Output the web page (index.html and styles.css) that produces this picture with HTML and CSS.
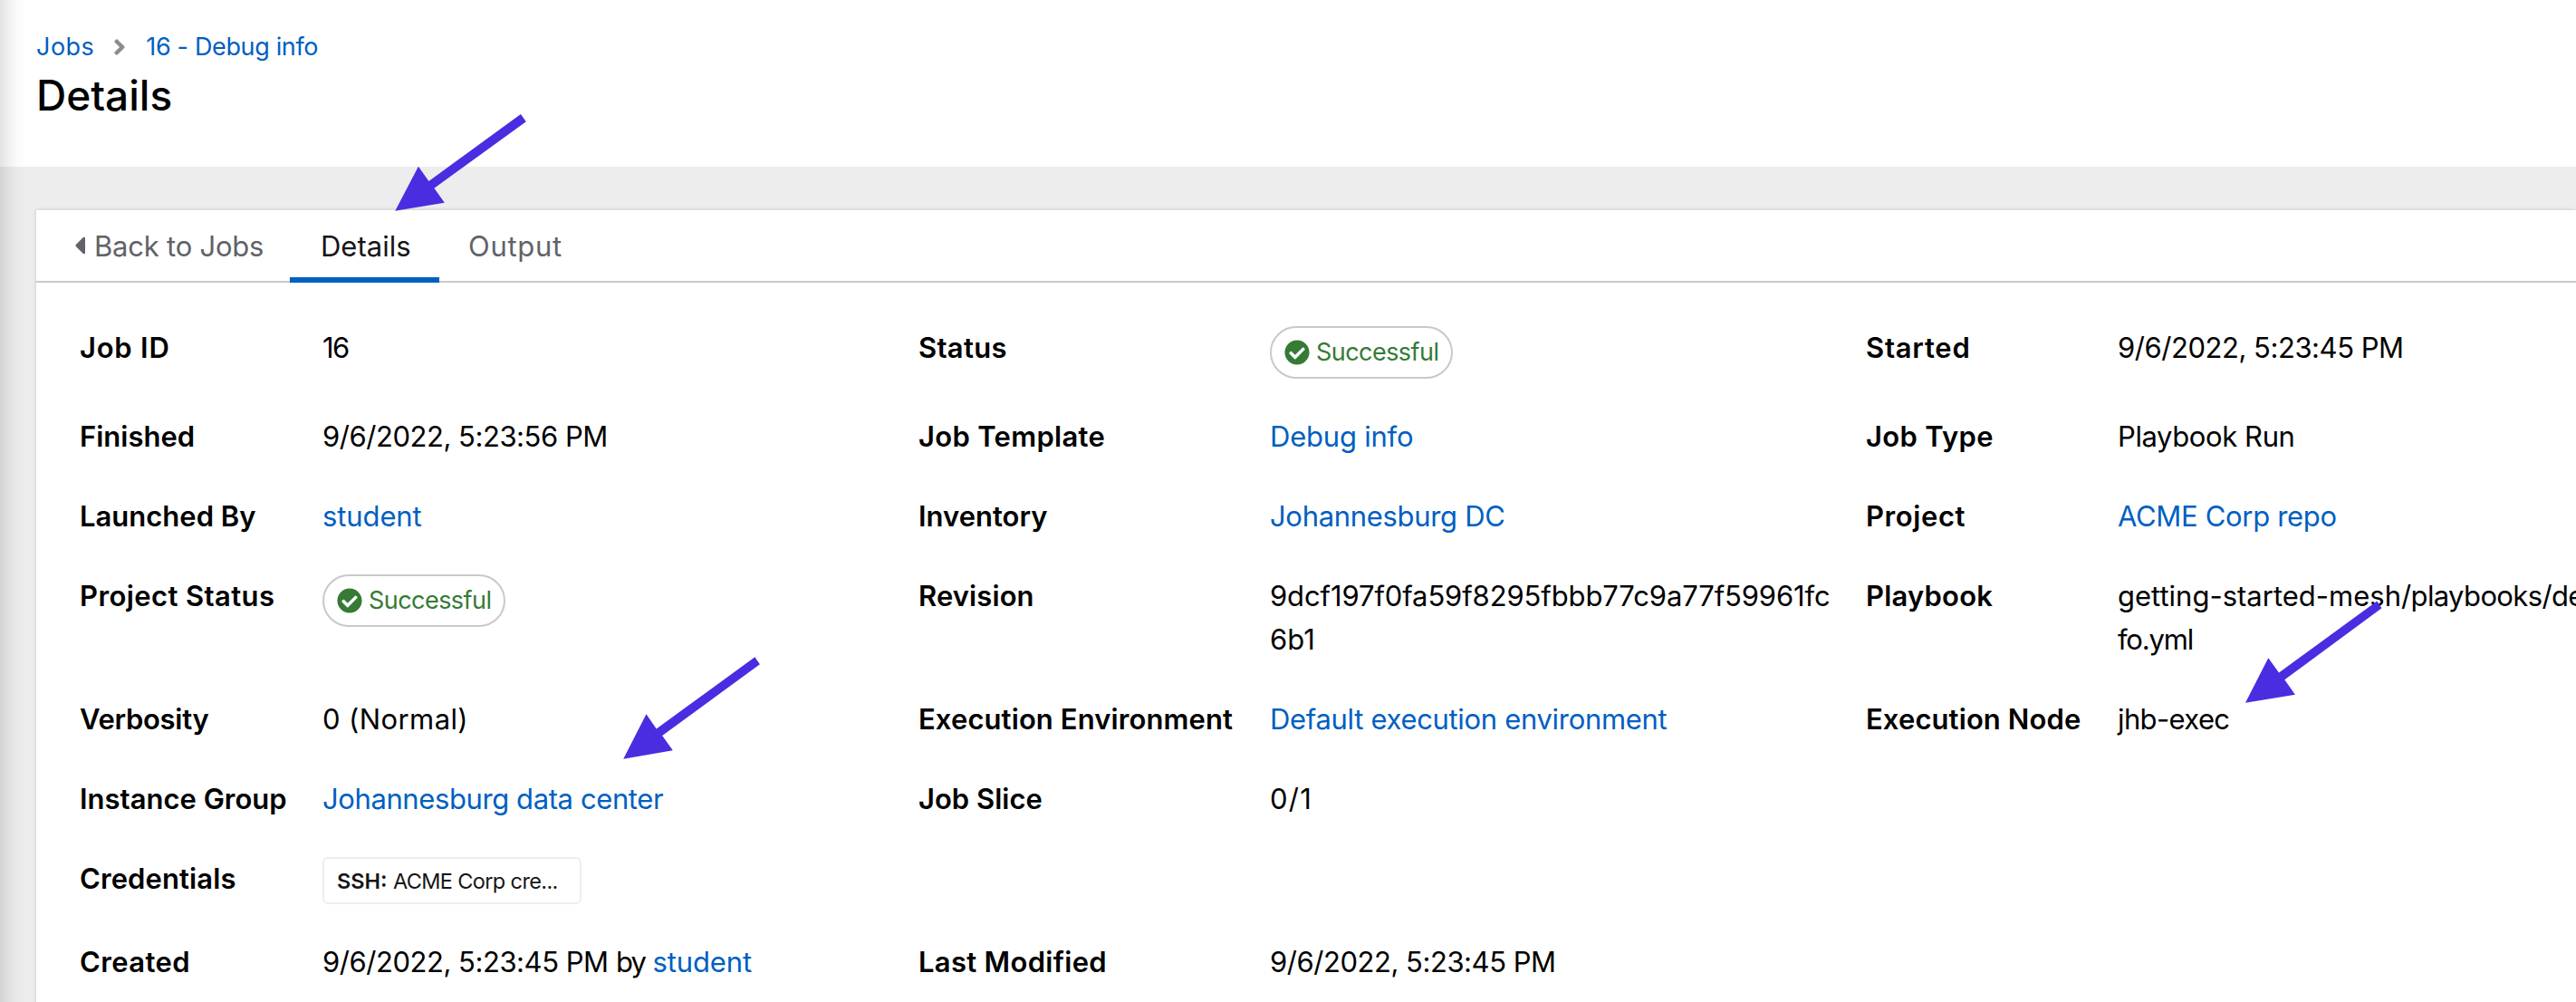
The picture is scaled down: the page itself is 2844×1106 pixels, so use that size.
FILE: index.html
```
<!DOCTYPE html>
<html lang="en">
<head>
<meta charset="utf-8">
<title>Details</title>
<link rel="stylesheet" href="styles.css">
</head>
<body>
<svg class="sprite" width="0" height="0" aria-hidden="true">
  <symbol id="check" viewBox="0 0 512 512"><path d="M504 256c0 136.967-111.033 248-248 248S8 392.967 8 256 119.033 8 256 8s248 111.033 248 248zM227.314 387.314l184-184c6.248-6.248 6.248-16.379 0-22.627l-22.627-22.627c-6.248-6.249-16.379-6.249-22.628 0L216 308.118l-70.059-70.059c-6.248-6.248-16.379-6.248-22.628 0l-22.627 22.627c-6.248 6.248-6.248 16.379 0 22.627l104 104c6.249 6.249 16.379 6.249 22.628.001z"/></symbol>
</svg>
<div class="page">
  <header class="page-header">
    <nav class="breadcrumb">
      <a class="ls-p49" href="#">Jobs</a>
      <svg class="chevron" viewBox="0 0 256 512"><path d="M224.3 273l-136 136c-9.4 9.4-24.6 9.4-33.9 0l-22.6-22.6c-9.4-9.4-9.4-24.6 0-33.9l96.4-96.4-96.4-96.4c-9.4-9.4-9.4-24.6 0-33.9L54.3 103c9.4-9.4 24.6-9.4 33.9 0l136 136c9.5 9.4 9.5 24.6.1 34z"/></svg>
      <a class="ls-n35" href="#">16 - Debug info</a>
    </nav>
    <h1>Details</h1>
  </header>
  <main class="card">
    <nav class="tabs">
      <a class="tab back ls-n22" href="#"><svg class="caret" viewBox="0 0 192 512"><path d="M192 127.338v257.324c0 17.818-21.543 26.741-34.142 14.142L29.196 270.142c-7.81-7.81-7.81-20.474 0-28.284l128.662-128.662c12.599-12.6 34.142-3.676 34.142 14.142z"/></svg>Back to Jobs</a>
      <a class="tab current" href="#">Details</a>
      <a class="tab ls-p70" href="#">Output</a>
    </nav>
    <dl class="details">
      <dt class="ls-p76">Job ID</dt><dd class="ls-n161">16</dd>
      <dt class="ls-p30">Status</dt><dd><span class="pill"><svg viewBox="0 0 512 512"><use href="#check"/></svg>Successful</span></dd>
      <dt class="ls-p76">Started</dt><dd class="date">9/6/2022, 5:23:45 PM</dd>

      <dt class="ls-0">Finished</dt><dd class="date">9/6/2022, 5:23:56 PM</dd>
      <dt class="ls-p30">Job Template</dt><dd><a class="ls-n22" href="#">Debug info</a></dd>
      <dt class="ls-p30">Job Type</dt><dd class="ls-n40">Playbook Run</dd>

      <dt class="ls-0">Launched By</dt><dd><a class="ls-n10" href="#">student</a></dd>
      <dt class="ls-0">Inventory</dt><dd><a href="#">Johannesburg DC</a></dd>
      <dt class="ls-p60">Project</dt><dd><a href="#">ACME Corp repo</a></dd>

      <dt class="ls-p40">Project Status</dt><dd><span class="pill"><svg viewBox="0 0 512 512"><use href="#check"/></svg>Successful</span></dd>
      <dt>Revision</dt><dd class="ls-n10">9dcf197f0fa59f8295fbbb77c9a77f59961fc<br><span class="ls-0">6b1</span></dd>
      <dt class="ls-p20">Playbook</dt><dd class="ls-0">getting-started-mesh<span class="ls-n63">/playbooks/debug_in</span><br><span class="ls-n120">fo.yml</span></dd>

      <dt class="ls-n30">Verbosity</dt><dd class="ls-p40">0 (Normal)</dd>
      <dt>Execution Environment</dt><dd><a href="#">Default execution environment</a></dd>
      <dt>Execution Node</dt><dd class="ls-n63">jhb-exec</dd>

      <dt class="ls-0">Instance Group</dt><dd><a class="ls-n40" href="#">Johannesburg data center</a></dd>
      <dt class="ls-0">Job Slice</dt><dd class="ls-p120">0/1</dd>

      <dt class="new-row">Credentials</dt><dd class="full"><span class="chip"><b>SSH:</b> <span class="ls-n63">ACME Corp cre...</span></span></dd>

      <dt class="ls-p40">Created</dt><dd class="date">9/6/2022, 5:23:45 PM <span class="by">by</span> <a class="ls-n10" href="#">student</a></dd>
      <dt class="ls-p30">Last Modified</dt><dd class="date">9/6/2022, 5:23:45 PM</dd>
    </dl>
  </main>
  <div class="edge-shadow"></div>
  <svg class="arrows" viewBox="0 0 2844 1106" aria-hidden="true">
    <path d="M436.3 232.7L461.9 183.7 473.4 200 574.9 126 580.8 134.3 479.4 207.8 490.8 223.7Z"/>
    <path d="M688.2 837.7L713.5 788.3 724.7 804.5 833.4 725.3 838.9 733.2 731.2 812 742.8 828.3Z"/>
    <path d="M2479 775.7L2504.3 726.3 2516 742.5 2624.3 663.5 2629.5 671.3 2522.3 750.2 2533.9 766.7Z"/>
  </svg>
</div>
</body>
</html>
```
FILE: styles.css
```
* { box-sizing: border-box; }
body { margin: 0; font-family: Inter, "Liberation Sans", sans-serif; font-size: 31px; line-height: 48px; color: #000; }
a { color: #005fc1; text-decoration: none; }
.sprite { position: absolute; }
.page { position: relative; width: 2844px; height: 1106px; overflow: hidden; background: #ededed; }

.page-header { height: 184px; padding: 31px 40px 0; background: #fff; }
.breadcrumb { display: flex; align-items: center; height: 42px; font-size: 27px; line-height: 42px; }
.chevron { width: 14px; height: 28px; margin: 0 22px 0 21px; fill: #8a8d90; }
h1 { margin: 3px 0 0; font-size: 46px; line-height: 58px; font-weight: 500; }

.card { height: 900px; margin: 48px 0 0 40px; background: #fff; box-shadow: 0 0 4px rgba(0, 0, 0, .18); }
.tabs { display: flex; height: 80px; border-bottom: 2px solid #c9c9c9; }
.tab { height: 80px; padding: 16px 32px 0; color: #606368; }
.back { display: flex; width: 280px; padding: 16px 0 0 42px; }
.caret { width: 12px; height: 32px; margin: 7px 10px 0 0; fill: #606368; }
.current { width: 165px; padding: 16px 0 0 34px; color: #151515; border-bottom: 6px solid #005fc1; }

.details { display: grid; grid-template-columns: 268px 658px 388px 658px 278px 700px; row-gap: 40px; margin: 0; padding: 48px 0 0 48px; }
dt { font-weight: 600; letter-spacing: .1px; }
dd { margin: 0; letter-spacing: -.32px; white-space: nowrap; }
.date { letter-spacing: -.46px; }
.new-row { grid-column: 1; }
.full { grid-column: 2 / -1; }
.by { letter-spacing: -1.8px; }

.pill { display: flex; align-items: center; width: 202px; height: 58px; padding-left: 14px; border: 2px solid #c9c9c9; border-radius: 30px; color: #357a35; font-size: 27px; letter-spacing: -.55px; }
.pill svg { width: 28px; height: 28px; margin-right: 7px; fill: currentColor; }
.chip { display: block; width: 286px; height: 52px; padding-left: 14px; border: 2px solid #ededed; border-radius: 6px; color: #151515; font-size: 23.5px; line-height: 49px; }
.chip b { font-weight: 600; letter-spacing: 0; }

.edge-shadow { position: absolute; inset: 0 auto 0 0; width: 30px; background: linear-gradient(90deg, rgba(0, 0, 0, .11), rgba(0, 0, 0, .05) 35%, rgba(0, 0, 0, .015) 65%, transparent); }
.arrows { position: absolute; inset: 0; width: 2844px; height: 1106px; fill: #4a2de0; }

/* Letter-spacing steps: p = plus, n = minus, in hundredths of a pixel */
.ls-0 { letter-spacing: 0; }
.ls-p20 { letter-spacing: .2px; }
.ls-p30 { letter-spacing: .3px; }
.ls-p40 { letter-spacing: .4px; }
.ls-p49 { letter-spacing: .48px; }
.ls-p60 { letter-spacing: .6px; }
.ls-p70 { letter-spacing: .7px; }
.ls-p76 { letter-spacing: .76px; }
.ls-p120 { letter-spacing: 1.2px; }
.ls-n10 { letter-spacing: -.11px; }
.ls-n22 { letter-spacing: -.22px; }
.ls-n30 { letter-spacing: -.3px; }
.ls-n35 { letter-spacing: -.35px; }
.ls-n40 { letter-spacing: -.4px; }
.ls-n63 { letter-spacing: -.63px; }
.ls-n120 { letter-spacing: -1.2px; }
.ls-n161 { letter-spacing: -1.6px; }
```
